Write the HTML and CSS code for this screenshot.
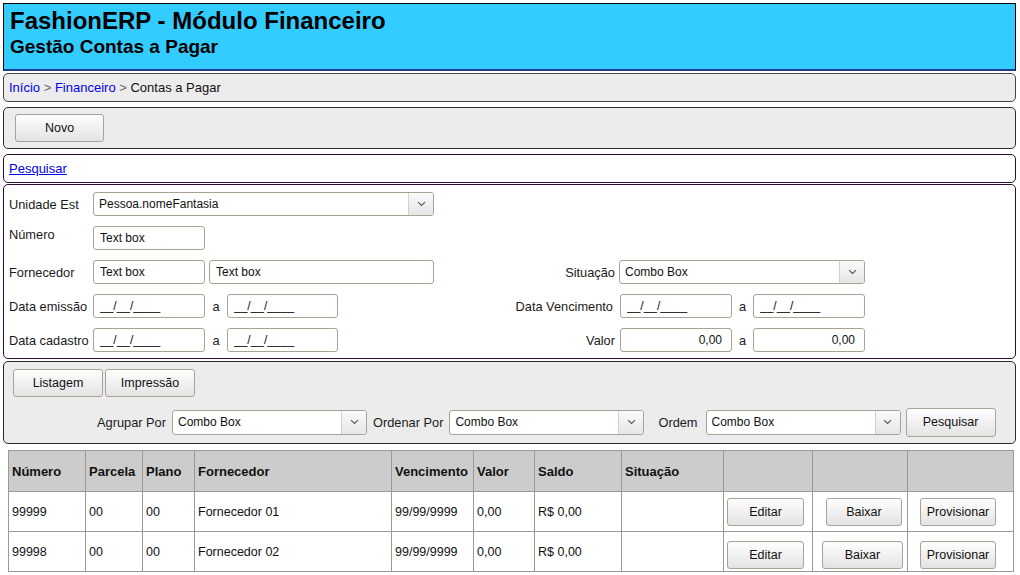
FILE: index.html
```html
<!DOCTYPE html>
<html lang="pt-BR">
<head>
<meta charset="utf-8">
<title>FashionERP - Contas a Pagar</title>
<link rel="stylesheet" href="styles.css">
</head>
<body>
<header class="app-header">
  <h1 class="title">FashionERP - Módulo Financeiro</h1>
  <h2 class="subtitle">Gestão Contas a Pagar</h2>
</header>

<nav class="panel crumbs"><a href="#" class="link">Início</a> <span class="sep">&gt;</span> <a href="#" class="link">Financeiro</a> <span class="sep">&gt;</span> Contas a Pagar</nav>

<div class="panel toolbar"><button class="btn btn-novo" type="button">Novo</button></div>

<div class="panel panel-white link-bar"><a href="#" class="link link-u">Pesquisar</a></div>

<form class="panel panel-white filters">
  <div class="row">
    <div class="left">
      <span class="lbl">Unidade Est</span>
      <div class="combo w341"><span class="combo-text">Pessoa.nomeFantasia</span><span class="combo-arrow"><svg width="9" height="6" viewBox="0 0 9 6"><path d="M1 1.2l3.5 3.3L8 1.2" fill="none" stroke="#555" stroke-width="1.1"/></svg></span></div>
    </div>
  </div>
  <div class="row">
    <div class="left">
      <span class="lbl lbl-up">Número</span>
      <input class="field w112" type="text" value="Text box">
    </div>
  </div>
  <div class="row">
    <div class="left">
      <span class="lbl">Fornecedor</span>
      <input class="field w112" type="text" value="Text box">
      <input class="field w225 ml4" type="text" value="Text box">
    </div>
    <div class="right">
      <span class="rlbl rlbl-sit">Situação</span>
      <div class="combo w246"><span class="combo-text">Combo Box</span><span class="combo-arrow"><svg width="9" height="6" viewBox="0 0 9 6"><path d="M1 1.2l3.5 3.3L8 1.2" fill="none" stroke="#555" stroke-width="1.1"/></svg></span></div>
    </div>
  </div>
  <div class="row">
    <div class="left">
      <span class="lbl">Data emissão</span>
      <input class="field w112" type="text" value="__/__/____">
      <span class="a a22">a</span>
      <input class="field w111" type="text" value="__/__/____">
    </div>
    <div class="right">
      <span class="rlbl rlbl-vc">Data Vencimento</span>
      <input class="field w112" type="text" value="__/__/____">
      <span class="a a21">a</span>
      <input class="field w112" type="text" value="__/__/____">
    </div>
  </div>
  <div class="row">
    <div class="left">
      <span class="lbl">Data cadastro</span>
      <input class="field w112" type="text" value="__/__/____">
      <span class="a a22">a</span>
      <input class="field w111" type="text" value="__/__/____">
    </div>
    <div class="right">
      <span class="rlbl">Valor</span>
      <input class="field w112 num" type="text" value="0,00">
      <span class="a a21">a</span>
      <input class="field w112 num" type="text" value="0,00">
    </div>
  </div>
</form>

<div class="panel report">
  <div class="report-btns">
    <button class="btn btn-rep" type="button">Listagem</button>
    <button class="btn btn-rep" type="button">Impressão</button>
  </div>
  <div class="report-opts">
    <span class="olbl olbl-first">Agrupar Por</span>
    <div class="combo w195"><span class="combo-text">Combo Box</span><span class="combo-arrow"><svg width="9" height="6" viewBox="0 0 9 6"><path d="M1 1.2l3.5 3.3L8 1.2" fill="none" stroke="#555" stroke-width="1.1"/></svg></span></div>
    <span class="olbl">Ordenar Por</span>
    <div class="combo w195"><span class="combo-text">Combo Box</span><span class="combo-arrow"><svg width="9" height="6" viewBox="0 0 9 6"><path d="M1 1.2l3.5 3.3L8 1.2" fill="none" stroke="#555" stroke-width="1.1"/></svg></span></div>
    <span class="olbl olbl-ordem">Ordem</span>
    <div class="combo w195"><span class="combo-text">Combo Box</span><span class="combo-arrow"><svg width="9" height="6" viewBox="0 0 9 6"><path d="M1 1.2l3.5 3.3L8 1.2" fill="none" stroke="#555" stroke-width="1.1"/></svg></span></div>
    <button class="btn btn-search" type="button">Pesquisar</button>
  </div>
</div>

<table class="grid">
  <colgroup>
    <col class="c-num"><col class="c-parc"><col class="c-plano"><col class="c-forn"><col class="c-venc"><col class="c-valor"><col class="c-saldo"><col class="c-sit"><col class="c-ed"><col class="c-bx"><col class="c-pv">
  </colgroup>
  <thead>
    <tr><th>Número</th><th>Parcela</th><th>Plano</th><th>Fornecedor</th><th>Vencimento</th><th>Valor</th><th>Saldo</th><th>Situação</th><th></th><th></th><th></th></tr>
  </thead>
  <tbody>
    <tr class="r1">
      <td>99999</td><td>00</td><td>00</td><td>Fornecedor 01</td><td>99/99/9999</td><td>0,00</td><td>R$ 0,00</td><td></td>
      <td class="act act-ed"><button class="btn btn-ed" type="button">Editar</button></td>
      <td class="act act-bx1"><button class="btn btn-bx1" type="button">Baixar</button></td>
      <td class="act act-pv"><button class="btn btn-pv" type="button">Provisionar</button></td>
    </tr>
    <tr class="r2">
      <td>99998</td><td>00</td><td>00</td><td>Fornecedor 02</td><td>99/99/9999</td><td>0,00</td><td>R$ 0,00</td><td></td>
      <td class="act act-ed"><button class="btn btn-ed" type="button">Editar</button></td>
      <td class="act act-bx2"><button class="btn btn-bx2" type="button">Baixar</button></td>
      <td class="act act-pv"><button class="btn btn-pv" type="button">Provisionar</button></td>
    </tr>
  </tbody>
</table>
</body>
</html>
```

FILE: styles.css
```css
html, body {
  background: #ffffff;
}
body {
  margin: 3px;
  font-family: "Liberation Sans", Arial, sans-serif;
  font-size: 13px;
  color: #111111;
}

/* Header */
.app-header {
  width: 1013px;
  box-sizing: border-box;
  background: #33ccff;
  border: 1px solid #000000;
  border-bottom: 2px solid #1c3f94;
  padding: 3px 6px 11px;
}
.title {
  margin: 0;
  font-size: 24px;
  line-height: 28px;
  font-weight: bold;
  color: #000000;
}
.subtitle {
  margin: 1px 0 0;
  font-size: 19px;
  line-height: 22px;
  font-weight: bold;
  color: #000000;
}

/* Panels */
.panel {
  width: 1013px;
  box-sizing: border-box;
  border: 1px solid #2a2a2a;
  border-radius: 5px;
  background: #ececec;
}
.panel-white {
  background: #ffffff;
  border-color: #2e0b35;
}
.crumbs {
  margin-top: 2px;
  height: 29px;
  line-height: 27px;
  padding: 0 5px;
  border-color: #444444;
  color: #111111;
}
.sep {
  color: #666666;
}
.link {
  color: #0000ee;
  text-decoration: none;
}
.link-u {
  text-decoration: underline;
}
.toolbar {
  margin-top: 5px;
  padding: 6px 11px;
}
.link-bar {
  margin-top: 5px;
  height: 29px;
  line-height: 27px;
  padding: 0 5px;
}

/* Buttons */
.btn {
  box-sizing: border-box;
  height: 28px;
  padding: 0;
  border: 1px solid #aaa295;
  border-radius: 3px;
  background: linear-gradient(#fefefe, #e3e3e3);
  font-family: "Liberation Sans", Arial, sans-serif;
  font-size: 12.5px;
  color: #111111;
  display: inline-block;
  vertical-align: middle;
}
.btn-novo { width: 89px; }

/* Filters form */
.filters {
  display: block;
  margin: 1px 0 0;
  padding: 7px 5px 6px;
}
.row {
  display: flex;
  align-items: center;
  height: 24px;
}
.row + .row {
  margin-top: 10px;
}
.left {
  width: 500px;
  display: flex;
  align-items: center;
  flex: none;
}
.right {
  display: flex;
  align-items: center;
}
.lbl {
  width: 84px;
  flex: none;
  font-size: 12.8px;
  color: #1a1a1a;
}
.lbl-up {
  padding-bottom: 8px;
}
.rlbl {
  width: 106px;
  flex: none;
  text-align: right;
  font-size: 12.8px;
  color: #1a1a1a;
  margin-right: 5px;
  box-sizing: border-box;
}
.rlbl-sit {
  margin-right: 4px;
}
.rlbl-vc {
  padding-right: 2px;
}
.field {
  box-sizing: border-box;
  height: 24px;
  border: 1px solid #aaa295;
  border-radius: 3px;
  padding: 0 6px;
  margin: 0;
  background: #ffffff;
  font-family: "Liberation Sans", Arial, sans-serif;
  font-size: 12px;
  color: #111111;
  flex: none;
  outline: none;
}
.num {
  text-align: right;
  padding-right: 9px;
}
.w111 { width: 111px; }
.w112 { width: 112px; }
.w225 { width: 225px; }
.w195 { width: 195px; }
.w246 { width: 246px; }
.w341 { width: 341px; }
.ml4 { margin-left: 4px; }
.a {
  flex: none;
  text-align: center;
  font-size: 12.8px;
  color: #1a1a1a;
}
.a22 { width: 22px; }
.a21 { width: 21px; }

/* Combo */
.combo {
  box-sizing: border-box;
  height: 24px;
  border: 1px solid #aaa295;
  border-radius: 3px;
  background: #ffffff;
  display: flex;
  align-items: stretch;
  flex: none;
  overflow: hidden;
}
.combo-text {
  flex: 1;
  padding-left: 5px;
  display: flex;
  align-items: center;
  font-size: 12px;
  color: #111111;
}
.combo-arrow {
  width: 24px;
  flex: none;
  border-left: 1px solid #d4d0c8;
  background: linear-gradient(#fafafa, #e6e6e6);
  display: flex;
  align-items: center;
  justify-content: center;
}

/* Report panel */
.report {
  margin-top: 2px;
  padding: 7px 9px 7px;
}
.report-btns {
  display: flex;
  gap: 2px;
  height: 28px;
}
.btn-rep {
  width: 90px;
}
.report-opts {
  margin-top: 11px;
  height: 28px;
  display: flex;
  align-items: center;
}
.report-opts .combo {
  height: 25px;
}
.olbl {
  font-size: 12.8px;
  color: #1a1a1a;
  margin: 0 6px;
}
.olbl-first {
  margin-left: 84px;
}
.olbl-ordem {
  margin-left: 14px;
  margin-right: 8px;
}
.btn-search {
  width: 90px;
  height: 29px;
  margin-left: 5px;
}

/* Table */
.grid {
  margin: 6px 0 0 5px;
  width: 1006px;
  table-layout: fixed;
  border-collapse: collapse;
}
.c-num { width: 77px; }
.c-parc { width: 57px; }
.c-plano { width: 52px; }
.c-forn { width: 197px; }
.c-venc { width: 82px; }
.c-valor { width: 61px; }
.c-saldo { width: 87px; }
.c-sit { width: 102px; }
.c-ed { width: 89px; }
.c-bx { width: 95px; }
.c-pv { width: 106px; }
.grid th,
.grid td {
  border: 1px solid #999999;
  padding: 0 3px;
  text-align: left;
  vertical-align: middle;
  white-space: nowrap;
  overflow: hidden;
}
.grid th {
  background: #cccccc;
  height: 40px;
  font-weight: bold;
  font-size: 13px;
  color: #111111;
}
.grid td {
  height: 39px;
  font-size: 12.5px;
  color: #111111;
}
.grid td.act {
  padding: 0;
}
.act-ed { padding-left: 3px !important; }
.act-bx1 { padding-left: 13px !important; }
.act-bx2 { padding-left: 9px !important; }
.act-pv { padding-left: 12px !important; }
.r2 .btn {
  margin-top: 7px;
}
.btn-ed { width: 77px; }
.btn-bx1 { width: 76px; }
.btn-bx2 { width: 81px; }
.btn-pv { width: 76px; }
```
